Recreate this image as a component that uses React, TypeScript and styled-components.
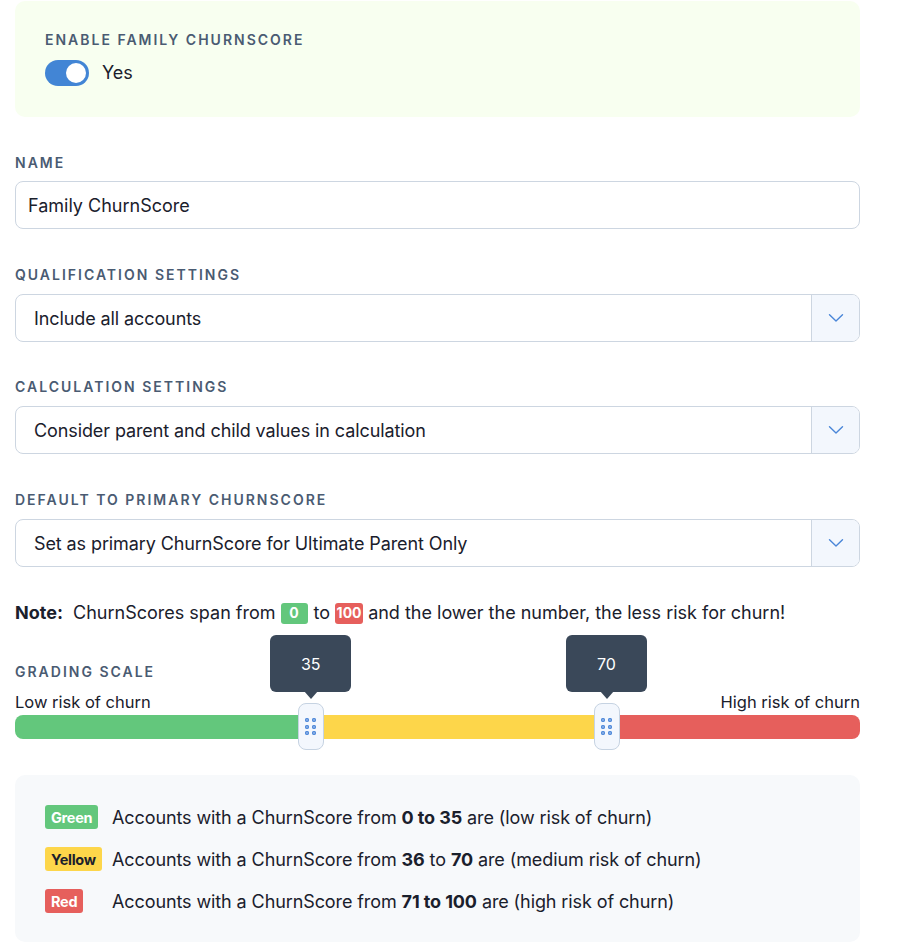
import React from "react";
import styled, { createGlobalStyle } from "styled-components";

const Global = createGlobalStyle`
  html, body { margin: 0; padding: 0; background: #ffffff; }
  body { font-family: Inter, "Noto Sans", sans-serif; color: #1a202c; }
  * { box-sizing: border-box; }
`;

const Page = styled.div`
  width: 845px;
  margin-left: 15px;
  padding-top: 1px;
  display: flex;
  flex-direction: column;
`;

const TogglePanel = styled.div`
  background: #f8fff0;
  border-radius: 10px;
  padding: 31px 30px 31px;
  display: flex;
  flex-direction: column;
`;

const Label = styled.div<{ $mb?: number }>`
  font-size: 14px;
  line-height: 16px;
  font-weight: 600;
  letter-spacing: 2px;
  text-transform: uppercase;
  color: #4a5b72;
  margin-bottom: ${(p) => p.$mb ?? 11}px;
`;

const Section = styled.div<{ $mt?: number }>`
  margin-top: ${(p) => p.$mt ?? 38}px;
  display: flex;
  flex-direction: column;
`;

const ToggleRow = styled.div`
  display: flex;
  align-items: center;
  gap: 13px;
`;

const Track = styled.span`
  width: 44px;
  height: 26px;
  border-radius: 13px;
  background: #4285d5;
  display: flex;
  align-items: center;
  justify-content: flex-end;
  padding: 0 3px;
`;

const Knob = styled.span`
  width: 20px;
  height: 20px;
  border-radius: 50%;
  background: #ffffff;
`;

const ToggleText = styled.span`
  font-size: 18px;
  line-height: 26px;
  color: #1a202c;
`;

const TextInput = styled.div`
  height: 48px;
  border: 1px solid #cdd6e1;
  border-radius: 8px;
  display: flex;
  align-items: center;
  padding-left: 12px;
  font-size: 18px;
  color: #1a202c;
  background: #fff;
`;

const Select = styled.div`
  height: 48px;
  border: 1px solid #cdd6e1;
  border-radius: 8px;
  display: flex;
  align-items: stretch;
  overflow: hidden;
  background: #fff;
`;

const SelectValue = styled.div`
  flex: 1;
  display: flex;
  align-items: center;
  padding-left: 18px;
  font-size: 18px;
  letter-spacing: -0.1px;
  color: #1a202c;
`;

const SelectButton = styled.div`
  width: 48px;
  border-left: 1px solid #cdd6e1;
  background: #f3f7fd;
  display: flex;
  align-items: center;
  justify-content: center;
`;

const Note = styled.p`
  margin: 34px 0 0;
  font-size: 18px;
  line-height: 24px;
  color: #1a202c;
  display: flex;
  align-items: center;
  white-space: pre;
`;

const Strong = styled.strong`
  font-weight: 700;
`;

const Badge = styled.span<{ $bg: string; $fg: string }>`
  display: inline-flex;
  align-items: center;
  justify-content: center;
  background: ${(p) => p.$bg};
  color: ${(p) => p.$fg};
  font-weight: 700;
  font-size: 14px;
  letter-spacing: 0;
  border-radius: 3px;
`;

const NoteBadge = styled(Badge)<{ $ml: number; $mr: number; $w: number }>`
  height: 21px;
  width: ${(p) => p.$w}px;
  margin: 0 ${(p) => p.$mr}px 0 ${(p) => p.$ml}px;
`;

const GradingSection = styled.div`
  margin-top: 39px;
  display: flex;
  flex-direction: column;
`;

const RiskRow = styled.div`
  display: flex;
  justify-content: space-between;
  font-size: 16.5px;
  line-height: 20px;
  color: #1a202c;
  margin-top: 12px;
`;

const Slider = styled.div`
  position: relative;
  margin-top: 3px;
  height: 24px;
  border-radius: 8px;
  display: flex;
`;

const Segment = styled.div<{ $color: string; $grow: number; $r?: string }>`
  flex: ${(p) => p.$grow};
  background: ${(p) => p.$color};
  border-radius: ${(p) => p.$r ?? "0"};
`;

const Handle = styled.div`
  position: absolute;
  top: -12px;
  width: 26px;
  height: 47px;
  margin-left: -13px;
  border: 1px solid #c6d3e2;
  border-radius: 8px;
  background: #f3f7fd;
  display: grid;
  grid-template-columns: 4px 4px;
  grid-template-rows: 4px 4px 4px;
  gap: 2.5px 3px;
  align-content: center;
  justify-content: center;
`;

const Dot = styled.span`
  width: 4px;
  height: 4px;
  border-radius: 50%;
  background: #8fb3e6;
  box-shadow: inset 0 0 0 1px #4a86d8;
`;

const Tooltip = styled.div`
  position: absolute;
  top: -80px;
  width: 81px;
  height: 57px;
  margin-left: -40.5px;
  background: #3a4859;
  border-radius: 6px;
  color: #ffffff;
  font-size: 16px;
  display: flex;
  align-items: center;
  justify-content: center;
  &::after {
    content: "";
    position: absolute;
    bottom: -7px;
    left: 50%;
    margin-left: -7px;
    border-left: 7px solid transparent;
    border-right: 7px solid transparent;
    border-top: 8px solid #3a4859;
  }
`;

const Legend = styled.div`
  margin-top: 36px;
  background: #f7f9fb;
  border-radius: 10px;
  padding: 30px 30px 29px;
  display: flex;
  flex-direction: column;
  gap: 18px;
`;

const LegendRow = styled.div`
  display: grid;
  grid-template-columns: 67px 1fr;
  align-items: center;
  height: 24px;
  font-size: 18px;
  letter-spacing: -0.1px;
  color: #1a202c;
`;

const LegendBadge = styled(Badge)`
  justify-self: start;
  height: 24px;
  padding: 0 6px;
  font-size: 14.5px;
  letter-spacing: -0.3px;
`;

const Chevron = () => (
  <svg width="16" height="10" viewBox="0 0 16 10" fill="none">
    <path d="M1.5 1.8 L8 8 L14.5 1.8" stroke="#4a86d8" strokeWidth="1.4" strokeLinecap="round" strokeLinejoin="round" />
  </svg>
);

const GREEN = "#63c77c";
const YELLOW = "#fdd64a";
const RED = "#e65f5c";

const selects = [
  { label: "Qualification Settings", value: "Include all accounts", mt: 38 },
  { label: "Calculation Settings", value: "Consider parent and child values in calculation", mt: 37 },
  { label: "Default to Primary ChurnScore", value: "Set as primary ChurnScore for Ultimate Parent Only", mt: 38 },
];

const thumbs = [35, 70];

const legend = [
  { name: "Green", bg: GREEN, fg: "#fff", range: "0 to 35", risk: "low" },
  { name: "Yellow", bg: YELLOW, fg: "#1a202c", range: "36", range2: "70", risk: "medium" },
  { name: "Red", bg: RED, fg: "#fff", range: "71 to 100", risk: "high" },
];

const Dots = () => (
  <>
    {Array.from({ length: 6 }).map((_, i) => (
      <Dot key={i} />
    ))}
  </>
);

export default function App() {
  return (
    <>
      <Global />
      <Page>
        <TogglePanel>
          <Label $mb={12}>Enable Family ChurnScore</Label>
          <ToggleRow>
            <Track>
              <Knob />
            </Track>
            <ToggleText>Yes</ToggleText>
          </ToggleRow>
        </TogglePanel>

        <Section>
          <Label $mb={10}>Name</Label>
          <TextInput>Family ChurnScore</TextInput>
        </Section>

        {selects.map((s) => (
          <Section key={s.label} $mt={s.mt}>
            <Label>{s.label}</Label>
            <Select>
              <SelectValue>{s.value}</SelectValue>
              <SelectButton>
                <Chevron />
              </SelectButton>
            </Select>
          </Section>
        ))}

        <Note>
          <Strong>Note:</Strong>
          {"  ChurnScores span from"}
          <NoteBadge $bg={GREEN} $fg="#fff" $w={27} $ml={5} $mr={6}>0</NoteBadge>
          {"to"}
          <NoteBadge $bg={RED} $fg="#fff" $w={28} $ml={5} $mr={0}>100</NoteBadge>
          {" and the lower the number, the less risk for churn!"}
        </Note>

        <GradingSection>
          <Label $mb={0}>Grading Scale</Label>
          <RiskRow>
            <span>Low risk of churn</span>
            <span>High risk of churn</span>
          </RiskRow>
          <Slider>
            <Segment $color={GREEN} $grow={35} $r="8px 0 0 8px" />
            <Segment $color={YELLOW} $grow={35} />
            <Segment $color={RED} $grow={30} $r="0 8px 8px 0" />
            {thumbs.map((t) => (
              <React.Fragment key={t}>
                <Tooltip style={{ left: `${t}%` }}>{t}</Tooltip>
                <Handle style={{ left: `${t}%` }}>
                  <Dots />
                </Handle>
              </React.Fragment>
            ))}
          </Slider>
        </GradingSection>

        <Legend>
          {legend.map((l) => (
            <LegendRow key={l.name}>
              <LegendBadge $bg={l.bg} $fg={l.fg}>{l.name}</LegendBadge>
              <span>
                Accounts with a ChurnScore from{" "}
                {l.range2 ? (
                  <>
                    <Strong>{l.range}</Strong> to <Strong>{l.range2}</Strong>
                  </>
                ) : (
                  <Strong>{l.range}</Strong>
                )}{" "}
                are ({l.risk} risk of churn)
              </span>
            </LegendRow>
          ))}
        </Legend>
      </Page>
    </>
  );
}
